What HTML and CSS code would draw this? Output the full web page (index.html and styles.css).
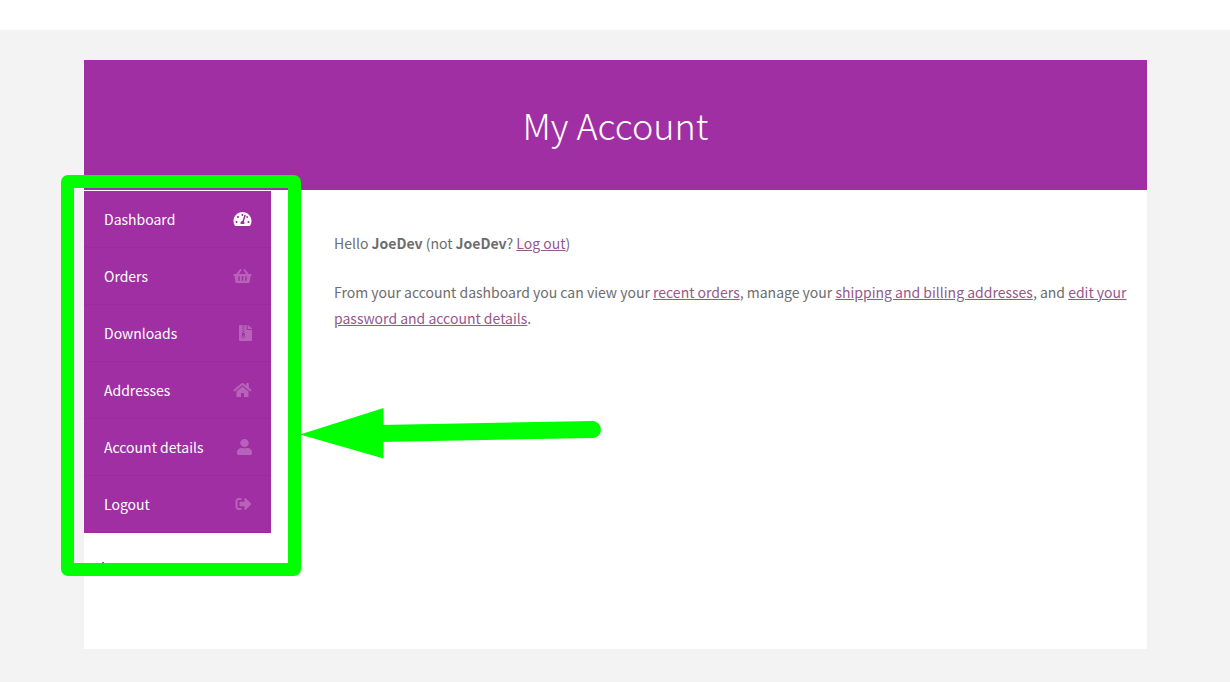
FILE: index.html
```html
<!DOCTYPE html>
<html lang="en">
<head>
<meta charset="utf-8">
<title>My Account</title>
<link rel="stylesheet" href="styles.css">
</head>
<body>
<div class="site">
  <main class="page">
    <header class="page-header">
      <h1 class="page-title">My Account</h1>
    </header>
    <div class="account">
      <nav class="account-nav" aria-label="Account">
        <ul class="menu">
          <li class="menu-item"><a class="menu-link active" href="#">Dashboard
            <svg class="icon" viewBox="0 0 576 512" width="19" height="16" aria-hidden="true"><path d="M288 32C128.94 32 0 160.94 0 320c0 52.8 14.25 102.26 39.06 144.8 5.61 9.62 16.3 15.2 27.44 15.2h443c11.14 0 21.83-5.58 27.44-15.2C561.75 422.26 576 372.8 576 320c0-159.06-128.94-288-288-288zm0 64c14.71 0 26.58 10.13 30.32 23.65-1.11 2.26-2.64 4.23-3.45 6.67l-9.22 27.67c-5.13 3.49-10.97 6.01-17.64 6.01-17.67 0-32-14.33-32-32S270.33 96 288 96zM96 384c-17.67 0-32-14.33-32-32s14.33-32 32-32 32 14.33 32 32-14.33 32-32 32zm48-160c-17.67 0-32-14.33-32-32s14.33-32 32-32 32 14.33 32 32-14.33 32-32 32zm246.77-72.41l-61.33 184C343.13 347.33 352 364.54 352 384c0 11.72-3.38 22.55-8.88 32H232.88c-5.5-9.45-8.88-20.28-8.88-32 0-33.94 26.5-61.43 59.9-63.59l61.34-184.01c4.17-12.56 17.73-19.45 30.36-15.17 12.57 4.19 19.35 17.79 15.17 30.36zm14.66 57.2l15.52-46.55c3.47-1.29 7.13-2.23 11.05-2.23 17.67 0 32 14.33 32 32s-14.33 32-32 32c-11.38-.01-20.89-6.28-26.57-15.22zM480 384c-17.67 0-32-14.33-32-32s14.33-32 32-32 32 14.33 32 32-14.33 32-32 32z"/></svg></a></li>
          <li class="menu-item"><a class="menu-link" href="#">Orders
            <svg class="icon" viewBox="0 0 576 512" width="19" height="16" aria-hidden="true"><path d="M576 216v16c0 13.255-10.745 24-24 24h-8l-26.113 182.788C514.509 462.435 494.257 480 470.37 480H105.63c-23.887 0-44.139-17.565-47.518-41.212L32 256h-8c-13.255 0-24-10.745-24-24v-16c0-13.255 10.745-24 24-24h67.341l106.78-146.821c10.395-14.292 30.407-17.453 44.701-7.058 14.293 10.395 17.453 30.408 7.058 44.701L170.477 192h235.046L326.12 82.821c-10.395-14.292-7.234-34.306 7.059-44.701 14.291-10.395 34.306-7.235 44.701 7.058L484.659 192H552c13.255 0 24 10.745 24 24zM312 392V280c0-13.255-10.745-24-24-24s-24 10.745-24 24v112c0 13.255 10.745 24 24 24s24-10.745 24-24zm112 0V280c0-13.255-10.745-24-24-24s-24 10.745-24 24v112c0 13.255 10.745 24 24 24s24-10.745 24-24zm-224 0V280c0-13.255-10.745-24-24-24s-24 10.745-24 24v112c0 13.255 10.745 24 24 24s24-10.745 24-24z"/></svg></a></li>
          <li class="menu-item"><a class="menu-link" href="#">Downloads
            <svg class="icon" viewBox="0 0 384 512" width="13" height="16" preserveAspectRatio="none" aria-hidden="true"><path d="M377 105L279.1 7c-4.5-4.5-10.6-7-17-7H256v128h128v-6.1c0-6.3-2.5-12.4-7-16.9zM128.4 336c-17.9 0-32.4 12.1-32.4 27 0 15 14.6 27 32.5 27s32.4-12.1 32.4-27-14.6-27-32.5-27zM224 136V0h-63.6v32h-32V0H24C10.7 0 0 10.7 0 24v464c0 13.3 10.7 24 24 24h336c13.3 0 24-10.7 24-24V160H248c-13.2 0-24-10.8-24-24zM95.9 32h32v32h-32zm32.3 384c-33.2 0-58-30.4-51.4-62.9L96.4 256v-32h32v-32h-32v-32h32v-32h-32V96h32V64h32v32h-32v32h32v32h-32v32h32v32h-32v32h22.1c5.7 0 10.7 4.1 11.8 9.7l17.3 87.7c6.4 32.4-18.4 62.6-51.4 62.6z"/></svg></a></li>
          <li class="menu-item"><a class="menu-link" href="#">Addresses
            <svg class="icon" viewBox="0 0 576 512" width="19" height="16" aria-hidden="true"><path d="M280.37 148.26L96 300.11V464a16 16 0 0 0 16 16l112.06-.29a16 16 0 0 0 15.92-16V368a16 16 0 0 1 16-16h64a16 16 0 0 1 16 16v95.64a16 16 0 0 0 16 16.05L464 480a16 16 0 0 0 16-16V300L295.67 148.26a12.19 12.19 0 0 0-15.3 0zM571.6 251.47L488 182.56V44.05a12 12 0 0 0-12-12h-56a12 12 0 0 0-12 12v72.61L318.47 43a48 48 0 0 0-61 0L4.34 251.47a12 12 0 0 0-1.6 16.9l25.5 31A12 12 0 0 0 45.15 301l235.22-193.74a12.19 12.19 0 0 1 15.3 0L530.9 301a12 12 0 0 0 16.9-1.6l25.5-31a12 12 0 0 0-1.7-16.93z"/></svg></a></li>
          <li class="menu-item"><a class="menu-link" href="#">Account details
            <svg class="icon" viewBox="0 0 448 512" width="15" height="16" preserveAspectRatio="none" aria-hidden="true"><path d="M224 256c70.7 0 128-57.3 128-128S294.7 0 224 0 96 57.3 96 128s57.3 128 128 128zm89.6 32h-16.7c-22.2 10.2-46.9 16-72.9 16s-50.6-5.8-72.9-16h-16.7C60.2 288 0 348.2 0 422.4V464c0 26.5 21.5 48 48 48h352c26.5 0 48-21.5 48-48v-41.6c0-74.2-60.2-134.4-134.4-134.4z"/></svg></a></li>
          <li class="menu-item"><a class="menu-link" href="#">Logout
            <svg class="icon" viewBox="0 0 512 512" width="17" height="16" aria-hidden="true"><path d="M497 273L329 441c-15 15-41 4.5-41-17v-96H152c-13.3 0-24-10.7-24-24v-96c0-13.3 10.7-24 24-24h136V88c0-21.4 25.9-32 41-17l168 168c9.3 9.4 9.3 24.6 0 34zM192 436v-40c0-6.6-5.4-12-12-12H96c-17.7 0-32-14.3-32-32V160c0-17.7 14.3-32 32-32h84c6.6 0 12-5.4 12-12V76c0-6.6-5.4-12-12-12H96c-53 0-96 43-96 96v192c0 53 43 96 96 96h84c6.6 0 12-5.4 12-12z"/></svg></a></li>
        </ul>
        <div class="speck"></div>
        <div class="highlight"></div>
        <svg class="arrow" viewBox="0 0 302 54" width="302" height="54" aria-hidden="true">
          <path class="arrow-head" d="M0 27.5L83.500 1V51.500z"/>
          <path class="arrow-shaft" d="M80 26.500L292.500 22.500"/>
        </svg>
      </nav>
      <section class="content">
        <p>Hello <strong>JoeDev</strong> (not <strong>JoeDev</strong>? <a href="#">Log out</a>)</p>
        <p>From your account dashboard you can view your <a href="#">recent orders</a>, manage your <a href="#">shipping and billing addresses</a>, and <a href="#">edit your password and account details</a>.</p>
      </section>
    </div>
  </main>
</div>
</body>
</html>
```

FILE: styles.css
```css
* { box-sizing: border-box; }

body {
  margin: 0;
  padding-top: 30px;
  background: #fff;
  color: #6d6d6d;
  font-family: "Noto Sans CJK SC", "Noto Sans", sans-serif;
  font-size: 14px;
  line-height: 26px;
}

.site {
  min-height: calc(100vh - 30px);
  padding: 30px 83px 33px 84px;
  background: #f3f3f3;
}

.page {
  min-height: 589px;
  background: #fff;
}

.page-header {
  padding: 34px 20px 36px;
  background: #9f2fa2;
  text-align: center;
}

.page-title {
  margin: 0;
  color: #fff;
  font-size: 36px;
  font-weight: 300;
  line-height: 60px;
}

.account {
  display: grid;
  grid-template-columns: 187px 1fr;
  column-gap: 63px;
  align-items: start;
  padding-top: 1px;
}

.account-nav { position: relative; }

.menu {
  margin: 0;
  padding: 0;
  background: #9f2fa2;
  list-style: none;
}

.menu-item { border-bottom: 1px solid #982d9b; }

.menu-link {
  display: flex;
  align-items: center;
  justify-content: space-between;
  padding: 15px 19px 15px 20px;
  color: #fff;
  text-decoration: none;
}

.icon {
  fill: currentColor;
  opacity: 0.25;
}

.active .icon { opacity: 1; }

.content { padding-top: 39px; }

.content p { margin: 0 0 23px; }

.content a {
  color: #96588a;
  text-decoration: underline;
}

.speck {
  position: absolute;
  top: 371px;
  left: 18px;
  width: 2px;
  height: 2px;
  background: #96588a;
}

.highlight {
  position: absolute;
  inset: -16px -30px -43px -23px;
  border: 13px solid #0f0;
  border-radius: 7px;
  pointer-events: none;
}

.arrow {
  position: absolute;
  top: 216px;
  left: 216px;
  pointer-events: none;
}

.arrow-head { fill: #0f0; }

.arrow-shaft {
  fill: none;
  stroke: #0f0;
  stroke-width: 17;
  stroke-linecap: round;
}
```
